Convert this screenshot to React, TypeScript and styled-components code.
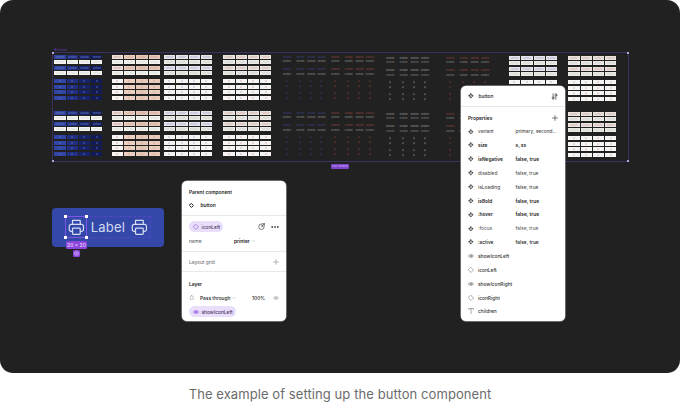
import React from 'react';
import styled, { createGlobalStyle } from 'styled-components';

const GlobalStyle = createGlobalStyle`
  * { box-sizing: border-box; }
  body { margin: 0; background: #fff; font-family: Inter, "Liberation Sans", sans-serif; overflow: hidden; }
`;

const Figure = styled.figure`
  margin: 0;
  width: 680px;
  height: 403px;
  display: flex;
  flex-direction: column;
  align-items: center;
`;

const Canvas = styled.div`
  position: relative;
  width: 680px;
  height: 373px;
  border-radius: 13px;
  background: #212121;
  overflow: hidden;
`;

const Caption = styled.figcaption`
  margin-top: 12px;
  font-size: 13px;
  line-height: 18px;
  letter-spacing: 0.08px;
  color: #6b6b6b;
  white-space: nowrap;
`;

/* ---------- variant set ---------- */

const VariantSet = styled.section`
  position: absolute;
  left: 52px;
  top: 52px;
  width: 577px;
  height: 110px;
  border: 1px solid #39315f;
`;

const SetName = styled.span`
  position: absolute;
  left: 1px;
  top: -4px;
  font-size: 3px;
  line-height: 3px;
  color: #6a3fb4;
`;

const SetHandle = styled.i<{ $x: 'left' | 'right'; $y: 'top' | 'bottom' }>`
  position: absolute;
  ${(p) => p.$x}: -1px;
  ${(p) => p.$y}: -1px;
  width: 2px;
  height: 2px;
  background: #b5a5da;
`;

const SetBadge = styled.span`
  position: absolute;
  left: 278px;
  top: 111px;
  width: 18px;
  height: 5px;
  border-radius: 1px;
  background: #7c45cc;
  color: #cdb2f2;
  font-size: 2.7px;
  line-height: 5px;
  text-align: center;
  white-space: nowrap;
`;

const Group = styled.div<{ $x: number; $y: number }>`
  position: absolute;
  left: ${(p) => p.$x - 53}px;
  top: ${(p) => p.$y - 53}px;
  display: flex;
  flex-direction: column;
`;

const Half = styled.div`
  height: 56px;
`;

const Row = styled.div<{ $gap: number; $ghost: boolean }>`
  display: grid;
  grid-template-columns: ${(p) => (p.$ghost ? '13.4px 10.9px 10.4px 8.6px' : 'repeat(4, 11.3px)')};
  column-gap: ${(p) => (p.$ghost ? 0 : 1)}px;
  height: 4px;
  margin-bottom: ${(p) => p.$gap}px;
`;

const Cell = styled.span<{ $bg: string; $fg: string; $w: string }>`
  width: ${(p) => p.$w};
  height: 4px;
  display: flex;
  align-items: center;
  justify-content: center;
  background: ${(p) => p.$bg};
  color: ${(p) => p.$fg};
  font-size: 2.5px;
  line-height: 3px;
  font-weight: 600;
`;

type Tone = { bg: string[]; alt: string[]; fg: string; altFg: string; ghost?: boolean };

const same = (c: string) => [c, c, c, c];
const none = same('transparent');

const blue: Tone = { bg: ['#3045a5', '#202f83', '#17236b', '#111b58'], alt: same('#f4f5f1'), fg: '#6270b2', altFg: '#dcdcd8' };
const peach: Tone = { bg: ['#efe2df', '#edd0c1', '#e6c8b8', '#e8cbbb'], alt: same('#f4f4ef'), fg: '#d2a79a', altFg: '#dededb' };
const whiteBlue: Tone = { bg: same('#e6e6ec'), alt: same('#ebebe6'), fg: '#b0b1cf', altFg: '#d4d4d0' };
const whiteRed: Tone = { bg: same('#ebe5e2'), alt: same('#ebeae7'), fg: '#d5b0aa', altFg: '#d4d4d0' };
const ghostBlue: Tone = { bg: none, alt: none, fg: '#353e70', altFg: '#797979', ghost: true };
const ghostRed: Tone = { bg: none, alt: none, fg: '#7d3f39', altFg: '#777777', ghost: true };
const ghostGrey: Tone = { bg: none, alt: none, fg: '#858585', altFg: '#707070', ghost: true };

const solidGaps = [1, 2, 1, 4, 2, 1, 2, 0];
const ghostGaps = [0.6, 4, 0.6, 3.4, 1, 3.2, 1, 0];

const Glyph = () => (
  <svg width="2.6" height="2.6" viewBox="0 0 4 4" fill="none" stroke="currentColor" strokeWidth=".8">
    <path d="M1 3.4V1h2M1 2.2h1.6" />
  </svg>
);

function VariantGroup({ x, y = 55, tone }: { x: number; y?: number; tone: Tone }) {
  const gaps = tone.ghost ? ghostGaps : solidGaps;
  return (
    <Group $x={x} $y={y}>
      {[0, 1].map((half) => (
        <Half key={half}>
          {gaps.map((gap, r) => {
            const alt = r === 1 || r === 3;
            const icon = r > 3;
            return (
              <Row key={r} $gap={gap} $ghost={!!tone.ghost}>
                {[0, 1, 2, 3].map((c) => {
                  const paleIcon = icon && !tone.ghost && tone !== blue && (tone !== peach || c === 0);
                  const bg = paleIcon ? '#f7f5f3' : alt ? tone.alt[c] : tone.bg[c];
                  return (
                    <Cell
                      key={c}
                      $bg={bg}
                      $fg={alt ? tone.altFg : tone.fg}
                      $w={tone.ghost ? '8.6px' : '11.3px'}
                    >
                      {icon ? <Glyph /> : 'Button'}
                    </Cell>
                  );
                })}
              </Row>
            );
          })}
        </Half>
      ))}
    </Group>
  );
}

/* ---------- selected button ---------- */

const BlueButton = styled.div`
  position: absolute;
  left: 52px;
  top: 208px;
  width: 112px;
  height: 39px;
  border-radius: 4px;
  background: #3448aa;
  padding: 8px 13px 8px 13px;
`;

const ButtonContent = styled.div`
  height: 22px;
  display: flex;
  align-items: center;
  padding: 0 2px;
  gap: 5.5px;
  border: 1px dashed #5346c4;
  color: #d5dcf1;
`;

const ButtonLabel = styled.span`
  width: 36px;
  text-align: center;
  font-family: Inter, sans-serif;
  font-size: 13px;
  line-height: 20px;
  letter-spacing: 0.2px;
`;

const Selection = styled.div`
  position: absolute;
  left: 65px;
  top: 216px;
  width: 22px;
  height: 22px;
  border: 1px solid #7f55e6;
`;

const Handle = styled.i<{ $x: 'left' | 'right'; $y: 'top' | 'bottom' }>`
  position: absolute;
  ${(p) => p.$x}: -2px;
  ${(p) => p.$y}: -2px;
  width: 3px;
  height: 3px;
  background: #fff;
`;

const SizeTag = styled.span`
  position: absolute;
  left: 66px;
  top: 241px;
  width: 21px;
  height: 8px;
  border-radius: 1.5px;
  background: #8b45dc;
  color: #f6edff;
  font-size: 5.1px;
  line-height: 8px;
  text-align: center;
  white-space: nowrap;
`;

const PropTag = styled.span`
  position: absolute;
  left: 73px;
  top: 250px;
  width: 7px;
  height: 7px;
  border-radius: 1.5px;
  background: #8b45dc;
  display: flex;
  align-items: center;
  justify-content: center;
`;

const Printer = () => (
  <svg width="17" height="17" viewBox="0 0 17 17" fill="none" stroke="currentColor" strokeWidth="1.25" strokeLinejoin="round">
    <path d="M4.6 5.2V1.3h7.8v3.9M4.6 12.4H3.2A1.9 1.9 0 0 1 1.3 10.5V7.2a1.9 1.9 0 0 1 1.9-1.9h10.6a1.9 1.9 0 0 1 1.9 1.9v3.3a1.9 1.9 0 0 1-1.9 1.9h-1.4" />
    <rect x="4.6" y="9.2" width="7.8" height="6.3" rx=".8" />
  </svg>
);

/* ---------- panels ---------- */

const Panel = styled.aside<{ $x: number; $y: number; $h: number }>`
  position: absolute;
  left: ${(p) => p.$x}px;
  top: ${(p) => p.$y}px;
  width: 104px;
  height: ${(p) => p.$h}px;
  border-radius: 5px;
  background: #fff;
  box-shadow: 0 0 0 0.5px #b5b5b5;
  color: #222;
  font-size: 4.85px;
  line-height: 8px;
  overflow: hidden;
`;

const Section = styled.div<{ $h: number; $pad?: number; $last?: boolean }>`
  height: ${(p) => p.$h}px;
  padding: ${(p) => p.$pad ?? 0}px 7px 0;
  border-bottom: ${(p) => (p.$last ? 'none' : '1px solid #e8e8e8')};
`;

const Line = styled.div<{ $h: number }>`
  height: ${(p) => p.$h}px;
  display: flex;
  align-items: center;
  white-space: nowrap;
`;

const Slot = styled.span<{ $w: number; $color?: string }>`
  width: ${(p) => p.$w}px;
  flex: none;
  display: flex;
  align-items: center;
  color: ${(p) => p.$color ?? '#444'};
`;

const Text = styled.span<{ $bold?: boolean; $color?: string; $weight?: number }>`
  font-weight: ${(p) => (p.$bold ? 600 : p.$weight ?? 400)};
  color: ${(p) => p.$color ?? '#222'};
`;

const Push = styled.span<{ $color?: string }>`
  margin-left: auto;
  display: flex;
  align-items: center;
  gap: 6px;
  color: ${(p) => p.$color ?? '#444'};
`;

const Pill = styled.span<{ $w: number }>`
  width: ${(p) => p.$w}px;
  height: 11px;
  border-radius: 5.5px;
  padding-left: 4px;
  display: flex;
  align-items: center;
  gap: 2.5px;
  background: #e9dffa;
  color: #8d4be0;
`;

const Svg = ({ size, children, sw = 1 }: { size: number; sw?: number; children: React.ReactNode }) => (
  <svg width={size} height={size} viewBox="0 0 10 10" fill="none" stroke="currentColor" strokeWidth={sw} strokeLinecap="round" strokeLinejoin="round">
    {children}
  </svg>
);

const FourDiamonds = () => (
  <svg width="5.6" height="5.6" viewBox="0 0 10 10" fill="currentColor">
    <path d="M5 .2 7.1 2.3 5 4.4 2.9 2.3zM5 5.6 7.1 7.7 5 9.8 2.9 7.7zM2.3 2.9 4.4 5 2.3 7.1.2 5zM7.7 2.9 9.8 5 7.7 7.1 5.6 5z" />
  </svg>
);
const Diamond = () => <Svg size={6}><path d="M5 .8 9.2 5 5 9.2.8 5z" /></Svg>;
const Eye = () => (
  <Svg size={6} sw={1.1}>
    <path d="M.6 5C2.5 1.900 7.5 1.900 9.4 5 7.5 8.100 2.5 8.100.6 5z" />
    <circle cx="5" cy="5" r="1.3" />
  </Svg>
);
const Plus = () => <Svg size={6} sw={1.2}><path d="M5 1v8M1 5h8" /></Svg>;
const Type = () => <Svg size={6}><path d="M1 2.5V1h8v1.5M5 1v8.5" /></Svg>;
const Drop = () => <Svg size={5.5}><path d="M5 .8C7 3.2 8 4.5 8 6a3 3 0 0 1-6 0C2 4.5 3 3.2 5 .8z" /></Svg>;
const Chevron = () => <Svg size={4}><path d="m2 3.5 3 3 3-3" /></Svg>;
const Swap = () => (
  <Svg size={7} sw={1}>
    <path d="M5 1.2a4 4 0 1 0 4 4.3M6.8.9h2.400v2.400M9 1 5.6 4.600M5.600 2.600v2.100h2.100" />
  </Svg>
);
const Dots = () => (
  <svg width="8" height="6" viewBox="0 0 8 6" fill="currentColor">
    <circle cx="1.2" cy="3" r=".9" /><circle cx="4" cy="3" r=".9" /><circle cx="6.8" cy="3" r=".9" />
  </svg>
);
const Sliders = () => (
  <Svg size={7}>
    <path d="M3 .8v4.700M3 8.300v.9M7 9.200V4.500M7 1.700V.8" />
    <circle cx="3" cy="6.900" r="1.400" /><circle cx="7" cy="3.100" r="1.400" />
  </Svg>
);

const properties: [string, string, number, string][] = [
  ['variant', 'primary, second...', 400, '#333'],
  ['size', 's, xs', 600, '#222'],
  ['isNegative', 'false, true', 600, '#222'],
  ['disabled', 'false, true', 400, '#444'],
  ['isLoading', 'false, true', 400, '#333'],
  ['isBold', 'false, true', 600, '#222'],
  [':hover', 'false, true', 600, '#222'],
  [':focus', 'false, true', 400, '#555'],
  [':active', 'false, true', 500, '#222'],
];

const slots: [React.ComponentType, string][] = [
  [Eye, 'showIconLeft'],
  [Diamond, 'iconLeft'],
  [Eye, 'showIconRight'],
  [Diamond, 'iconRight'],
  [Type, 'children'],
];

const corners = [['left', 'top'], ['right', 'top'], ['left', 'bottom'], ['right', 'bottom']] as const;

export default function App() {
  return (
    <Figure>
      <GlobalStyle />
      <Canvas>
        <VariantSet>
          <SetName>❖ button</SetName>
          <VariantGroup x={54.3} tone={blue} />
          <VariantGroup x={111.7} tone={peach} />
          <VariantGroup x={164} tone={whiteBlue} />
          <VariantGroup x={223.3} tone={whiteRed} />
          <VariantGroup x={282.7} tone={ghostBlue} />
          <VariantGroup x={331} tone={ghostRed} />
          <VariantGroup x={386} y={56} tone={ghostGrey} />
          <VariantGroup x={446} y={56} tone={ghostRed} />
          <VariantGroup x={509} y={56} tone={whiteBlue} />
          <VariantGroup x={568.3} y={56} tone={whiteRed} />
          {corners.map(([x, y]) => <SetHandle key={x + y} $x={x} $y={y} />)}
          <SetBadge>320 Variants</SetBadge>
        </VariantSet>

        <BlueButton>
          <ButtonContent>
            <Printer />
            <ButtonLabel>Label</ButtonLabel>
            <Printer />
          </ButtonContent>
        </BlueButton>
        <Selection>
          {corners.map(([x, y]) => <Handle key={x + y} $x={x} $y={y} />)}
        </Selection>
        <SizeTag>20 × 20</SizeTag>
        <PropTag>
          <svg width="5" height="5" viewBox="0 0 10 10" fill="none" stroke="#dcc4fa" strokeWidth="1.3">
            <path d="M5 .8 8.700 2.900v4.200L5 9.200 1.300 7.100V2.900z" /><circle cx="5" cy="5" r="1.400" />
          </svg>
        </PropTag>

        <Panel $x={182} $y={181} $h={140}>
          <Section $h={35} $pad={4}>
            <Line $h={13}><Text $bold>Parent component</Text></Line>
            <Line $h={14.5}>
              <Slot $w={11.5} $color="#222"><Svg size={5} sw={2}><path d="M5 1.2 8.8 5 5 8.8 1.2 5z" /></Svg></Slot>
              <Text $weight={600}>button</Text>
            </Line>
          </Section>
          <Section $h={36} $pad={4}>
            <Line $h={13}>
              <Pill $w={34}><Diamond /><Text $color="#4d3c68" $weight={500}>iconLeft</Text></Pill>
              <Push><Swap /><Dots /></Push>
            </Line>
            <Line $h={15}>
              <Slot $w={45}><Text $color="#555">name</Text></Slot>
              <Slot $w={30} $color="#999"><Text $weight={600}>printer</Text>&nbsp;<Chevron /></Slot>
            </Line>
          </Section>
          <Section $h={20}>
            <Line $h={19}>
              <Text $color="#666">Layout grid</Text>
              <Push $color="#999"><Plus /></Push>
            </Line>
          </Section>
          <Section $h={49} $pad={5} $last>
            <Line $h={13}><Text $bold>Layer</Text></Line>
            <Line $h={15}>
              <Slot $w={11} $color="#888"><Drop /></Slot>
              <Slot $w={52} $color="#999"><Text $weight={500}>Pass through</Text>&nbsp;<Chevron /></Slot>
              <Text $weight={500}>100%</Text>
              <Push $color="#aaa"><Eye /></Push>
            </Line>
            <Line $h={13}><Pill $w={47}><Eye /><Text $color="#47345f" $weight={500}>showIconLeft</Text></Pill></Line>
          </Section>
        </Panel>

        <Panel $x={461} $y={86} $h={235}>
          <Section $h={21}>
            <Line $h={20}>
              <Slot $w={10.5}><FourDiamonds /></Slot>
              <Text $weight={500}>button</Text>
              <Push><Sliders /></Push>
            </Line>
          </Section>
          <Section $h={214} $pad={3.5} $last>
            <Line $h={14}>
              <Text $bold>Properties</Text>
              <Push><Plus /></Push>
            </Line>
            {properties.map(([name, values, weight, color]) => (
              <Line key={name} $h={13.85}>
                <Slot $w={10} $color="#555"><FourDiamonds /></Slot>
                <Slot $w={37.5}><Text $weight={weight} $color={color}>{name}</Text></Slot>
                <Text $weight={weight} $color={color}>{values}</Text>
              </Line>
            ))}
            {slots.map(([Icon, name]) => (
              <Line key={name} $h={13.85}>
                <Slot $w={10} $color="#777"><Icon /></Slot>
                <Text $weight={500} $color="#333">{name}</Text>
              </Line>
            ))}
          </Section>
        </Panel>
      </Canvas>
      <Caption>The example of setting up the button component</Caption>
    </Figure>
  );
}
